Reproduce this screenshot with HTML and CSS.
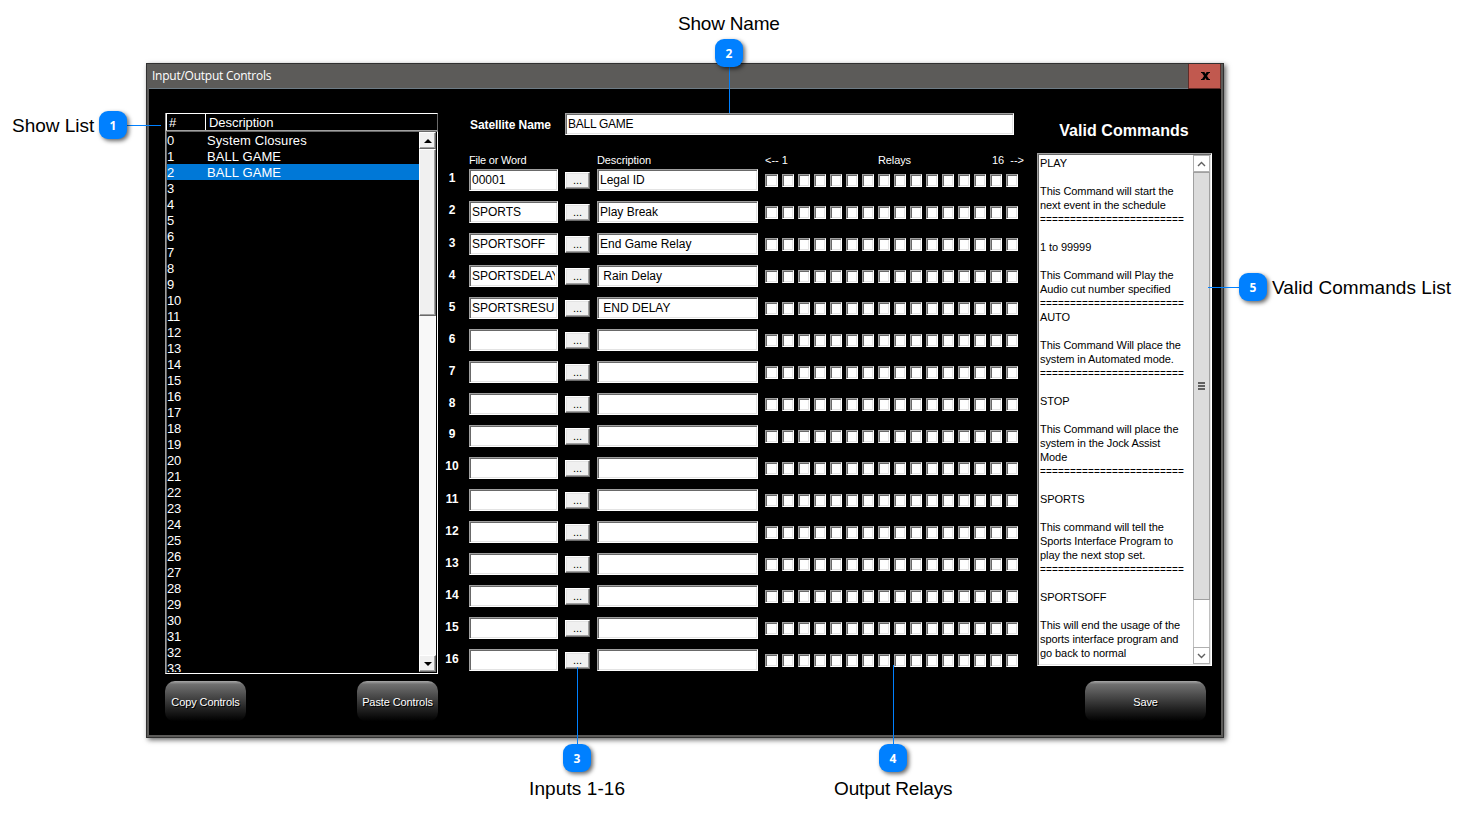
FILE: index.html
```html
<!DOCTYPE html>
<html>
<head>
	<meta charset="utf-8">
	<title>Input/Output Controls</title>
	<link rel="stylesheet" href="styles.css">
</head>
<body>
	<div class="window">
		<div class="titlebar">
			<span class="title">Input/Output Controls</span>
			<div class="close">
				<svg width="9" height="8" viewBox="0 0 9 8"><path d="M0 0h3.4l1.1 1.9L5.600 0H9v1H8L6 4l2 3h1v1H5.600L4.500 6.100 3.400 8H0V7h1l2-3-2-3H0z"/></svg>
			</div>
		</div>
		<div class="content">
			<div class="left">
				<div class="list">
					<div class="list-head">
						<div class="num">#</div>
						<div class="desc">Description</div>
					</div>
					<div class="list-body">
						<div class="items" id="items"></div>
						<div class="scroll">
							<div class="arrow"><svg width="8" height="4"><path d="M4 0l4 4H0z"/></svg></div>
							<div class="thumb"></div>
							<div class="track"></div>
							<div class="arrow"><svg width="8" height="4"><path d="M0 0h8L4 4z"/></svg></div>
						</div>
					</div>
				</div>
				<div class="buttons">
					<div class="btn">Copy Controls</div>
					<div class="btn">Paste Controls</div>
				</div>
			</div>
			<div class="middle">
				<div class="satellite">
					<span class="sat-label">Satellite Name</span>
					<div class="field sat-name">BALL GAME</div>
				</div>
				<div class="labels">
					<span class="file-label">File or Word</span>
					<span class="desc-label">Description</span>
					<div class="relay-labels">
						<span class="first">&lt;-- 1</span>
						<span class="relays">Relays</span>
						<span>16&nbsp; --&gt;</span>
					</div>
				</div>
				<div id="rows"></div>
			</div>
			<div class="right">
				<h2>Valid Commands</h2>
				<div class="commands">
<pre>PLAY

This Command will start the
next event in the schedule
<i>========================</i>

1 to 99999

This Command will Play the
Audio cut number specified
<i>========================</i>
AUTO

This Command Will place the
system in Automated mode.
<i>========================</i>

STOP

This Command will place the
system in the Jock Assist
Mode
<i>========================</i>

SPORTS

This command will tell the
Sports Interface Program to
play the next stop set.
<i>========================</i>

SPORTSOFF

This will end the usage of the
sports interface program and
go back to normal</pre>
					<div class="scroll2">
						<div class="arrow2"><svg width="9" height="6"><path d="M1 5l3.500-3.500L8 5"/></svg></div>
						<div class="thumb2"><div class="grip"></div></div>
						<div class="track2"></div>
						<div class="arrow2"><svg width="9" height="6"><path d="M1 1l3.500 3.500L8 1"/></svg></div>
					</div>
				</div>
				<div class="btn save">Save</div>
			</div>
		</div>
	</div>

	<!-- callouts over the window -->
	<div class="line line1"></div>
	<div class="line line2"></div>
	<div class="line line3"></div>
	<div class="line line4"></div>
	<div class="line line5"></div>
	<div class="badge badge1">1</div>
	<div class="badge badge2">2</div>
	<div class="badge badge3">3</div>
	<div class="badge badge4">4</div>
	<div class="badge badge5">5</div>
	<div class="note note1">Show List</div>
	<div class="note note2">Show Name</div>
	<div class="note note3">Inputs 1-16</div>
	<div class="note note4">Output Relays</div>
	<div class="note note5">Valid Commands List</div>
	<script src="script.js"></script>
</body>
</html>
```
FILE: styles.css
```css
* {
	box-sizing: border-box;
}
body {
	margin: 0;
	padding: 63px 0 0 146px;
	width: 1467px;
	height: 815px;
	overflow: hidden;
	position: relative;
	background-color: white;
	font-family: "Liberation Sans", Arial, sans-serif;
	font-size: 11px;
}
.window {
	width: 1078px;
	height: 675px;
	border: 1px solid #303030;
	box-shadow: 2px 2px 5px rgba(0, 0, 0, 0.6);
	background-color: #5c5b59;
	padding: 0 2px 2px 2px;
}
.titlebar {
	height: 25px;
	display: flex;
	justify-content: space-between;
	border-bottom: 1px solid #6d7b85;
	color: white;
}
.title {
	font-family: "Open Sans", "Noto Sans", sans-serif;
	font-size: 12px;
	line-height: 24px;
	padding-left: 3px;
	letter-spacing: -0.25px;
}
.close {
	width: 33px;
	height: 25px;
	padding-left: 1px;
	background-color: #c1594f;
	border: 1px solid #602c28;
	border-top: none;
	display: flex;
	align-items: center;
	justify-content: center;
}
.content {
	height: 646px;
	background-color: black;
	color: white;
	display: flex;
	padding: 24px 0 0 16px;
}

/* show list */
.left {
	width: 273px;
}
.list {
	height: 561px;
	border-left: 1px solid #a0a0a0;
	border-bottom: 1px solid white;
	font-size: 13px;
}
.list-head {
	height: 18px;
	display: flex;
	border-top: 1px solid white;
	border-bottom: 1px solid #a0a0a0;
	border-left: 1px solid white;
	border-right: 1px solid #696969;
	line-height: 17px;
}
.list-head .num {
	width: 39px;
	padding-left: 2px;
	border-right: 1px solid white;
}
.list-head .desc {
	padding-left: 3px;
	letter-spacing: -0.05px;
}
.list-body {
	height: 542px;
	display: flex;
	border-top: 1px solid #696969;
	border-left: 1px solid #696969;
	border-right: 1px solid white;
}
.items {
	flex: 1;
	height: 540px;
	overflow: hidden;
}
.item {
	height: 16px;
	line-height: 17px;
	display: flex;
}
.item span:first-child {
	width: 40px;
	letter-spacing: -0.25px;
}
.item span:last-child {
	letter-spacing: 0.1px;
}
.selected {
	background-color: #0078d7;
}
.scroll {
	width: 17px;
	height: 540px;
	display: flex;
	flex-direction: column;
	margin-right: 1px;
}
.arrow, .thumb {
	background-color: #f0f0f0;
	border: 1px solid white;
	border-right-color: #696969;
	border-bottom-color: #696969;
	box-shadow: inset -1px -1px #a0a0a0;
}
.arrow {
	height: 17px;
	display: flex;
	align-items: center;
	justify-content: center;
}
.thumb {
	height: 167px;
}
.track {
	flex: 1;
	background-color: #f8f8f8;
}
.buttons {
	display: flex;
	justify-content: space-between;
	margin-top: 7px;
}
.btn {
	width: 81px;
	height: 41px;
	border-radius: 10px;
	background: linear-gradient(#a8a8a8 0, #707070 8%, #4c4c4c 35%, #222 68%, #000 98%);
	text-align: center;
	line-height: 42px;
	text-shadow: 1px 1px black;
	letter-spacing: -0.1px;
	white-space: nowrap;
}

/* inputs 1-16 */
.middle {
	width: 599px;
	padding-left: 2px;
}
.field {
	height: 22px;
	background-color: white;
	color: black;
	border: 1px solid white;
	border-top-color: #a0a0a0;
	border-left-color: #a0a0a0;
	box-shadow: inset 1px 1px #696969, inset -1px -1px #e3e3e3;
	padding: 0 2px;
	font-size: 12px;
	line-height: 20px;
	white-space: pre;
	overflow: hidden;
}
.satellite {
	display: flex;
}
.sat-label {
	width: 125px;
	padding-left: 30px;
	font-size: 12px;
	font-weight: bold;
	line-height: 24px;
	letter-spacing: -0.08px;
	white-space: nowrap;
}
.sat-name {
	width: 449px;
	letter-spacing: -0.25px;
}
.labels {
	display: flex;
	height: 14px;
	line-height: 14px;
	margin: 16px 0 2px 29px;
	letter-spacing: -0.2px;
}
.file-label {
	width: 128px;
}
.desc-label {
	width: 168px;
	letter-spacing: -0.1px;
}
.relay-labels {
	width: 259px;
	display: flex;
	letter-spacing: 0;
}
.relay-labels .first {
	width: 113px;
}
.relay-labels .relays {
	width: 114px;
	letter-spacing: -0.1px;
}
.row {
	display: flex;
	height: 32px;
}
.row-num {
	width: 24px;
	margin-right: 5px;
	text-align: center;
	font-size: 12px;
	font-weight: bold;
	line-height: 18px;
}
.row:nth-child(n+3) .row-num {
	line-height: 20px;
}
.row:nth-child(n+9) .row-num {
	line-height: 18px;
}
.row:nth-child(n+11) .row-num {
	line-height: 20px;
}
.word {
	width: 89px;
	margin-right: 7px;
}
.word-text {
	overflow: hidden;
}
.browse {
	width: 25px;
	height: 17px;
	margin: 3px 7px 0 0;
	background-color: #f0f0f0;
	color: black;
	border: 1px solid white;
	border-right-color: #696969;
	border-bottom-color: #696969;
	box-shadow: inset -1px -1px #a0a0a0, inset 1px 1px #e3e3e3;
	text-align: center;
	line-height: 14px;
}
.description {
	width: 161px;
	margin-right: 7px;
}
.checks {
	display: flex;
	gap: 4px;
	padding-top: 5px;
}
.check {
	width: 12px;
	height: 13px;
	background-color: white;
	border: 1px solid white;
	border-top-color: #a0a0a0;
	border-left-color: #a0a0a0;
	box-shadow: inset 1px 1px #696969, inset -1px -1px #e3e3e3;
}
.check:first-child {
	width: 13px;
}

/* valid commands */
.right {
	width: 175px;
}
h2 {
	margin: 7px 0 12px 0;
	padding-right: 1px;
	font-size: 16px;
	line-height: 21px;
	letter-spacing: 0.05px;
	text-align: center;
	white-space: nowrap;
}
.commands {
	height: 513px;
	background-color: white;
	color: black;
	border: 1px solid white;
	border-top-color: #a0a0a0;
	border-left-color: #a0a0a0;
	box-shadow: inset 1px 1px #696969, inset -1px -1px #e3e3e3;
	padding: 1px;
	display: flex;
}
pre {
	flex: 1;
	margin: 1px 0 0 1px;
	font-family: inherit;
	font-size: 11px;
	line-height: 14px;
	letter-spacing: -0.08px;
}
pre i {
	font-style: normal;
	font-size: 10px;
	line-height: 10px;
	letter-spacing: 0.16px;
}
.scroll2 {
	width: 17px;
	display: flex;
	flex-direction: column;
}
.arrow2 {
	height: 17px;
	border: 1px solid #b0b0b0;
	display: flex;
	align-items: center;
	justify-content: center;
}
.arrow2 path {
	fill: none;
	stroke: #606060;
	stroke-width: 1.4;
}
.thumb2 {
	height: 428px;
	background-color: #dcdcdc;
	border: 1px solid #a0a0a0;
	display: flex;
	align-items: center;
	justify-content: center;
}
.grip {
	width: 7px;
	height: 8px;
	background: repeating-linear-gradient(#606060 0 2px, #dcdcdc 2px 3px);
}
.track2 {
	flex: 1;
	border-left: 1px solid #c0c0c0;
	border-right: 1px solid #c0c0c0;
}
.save {
	width: 121px;
	margin: 15px 0 0 48px;
}

/* callouts */
.badge {
	position: absolute;
	width: 28px;
	height: 28px;
	border-radius: 9px;
	background-color: #0080ff;
	box-shadow: 2px 2px 4px rgba(0, 0, 0, 0.6);
	color: white;
	font-family: "Open Sans", "Noto Sans", sans-serif;
	font-size: 12px;
	font-weight: bold;
	line-height: 29px;
	text-align: center;
}
.badge1 { left: 99px; top: 111px; }
.badge2 { left: 715px; top: 39px; }
.badge3 { left: 563px; top: 744px; }
.badge4 { left: 879px; top: 744px; }
.badge5 { left: 1239px; top: 273px; }
.line {
	position: absolute;
	background-color: #0080ff;
}
.line1 { left: 127px; top: 125px; width: 34px; height: 1px; }
.line2 { left: 729px; top: 67px; width: 1px; height: 46px; }
.line3 { left: 577px; top: 667px; width: 1px; height: 77px; }
.line4 { left: 893px; top: 665px; width: 1px; height: 79px; }
.line5 { left: 1208px; top: 287px; width: 31px; height: 1px; }
.note {
	position: absolute;
	color: black;
	font-size: 19px;
	line-height: 22px;
	white-space: nowrap;
}
.note1 { left: 12px; top: 115px; }
.note2 { left: 678px; top: 13px; letter-spacing: -0.2px; }
.note3 { left: 529px; top: 778px; letter-spacing: 0.1px; }
.note4 { left: 834px; top: 778px; letter-spacing: -0.15px; }
.note5 { left: 1272px; top: 277px; letter-spacing: 0.05px; }
```
FILE: script.js
```js
var shows = ['System Closures', 'BALL GAME', 'BALL GAME'];
var inputs = [
	['00001', 'Legal ID'],
	['SPORTS', 'Play Break'],
	['SPORTSOFF', 'End Game Relay'],
	['SPORTSDELAY', ' Rain Delay'],
	['SPORTSRESU', ' END DELAY']
];
var i, j, html = '';

for(i = 0; i < 34; i++)
	html += '<div class="item' + (i == 2 ? ' selected' : '') + '"><span>' + i + '</span><span>' + (shows[i] || '') + '</span></div>';
document.querySelector('#items').innerHTML = html;

html = '';
for(i = 0; i < 16; i++) {
	var input = inputs[i] || ['', ''];
	html += '<div class="row"><div class="row-num">' + (i + 1) + '</div>';
	html += '<div class="field word"><div class="word-text">' + input[0] + '</div></div>';
	html += '<div class="browse">...</div>';
	html += '<div class="field description">' + input[1] + '</div><div class="checks">';
	for(j = 0; j < 16; j++)
		html += '<div class="check"></div>';
	html += '</div></div>';
}
document.querySelector('#rows').innerHTML = html;
```
